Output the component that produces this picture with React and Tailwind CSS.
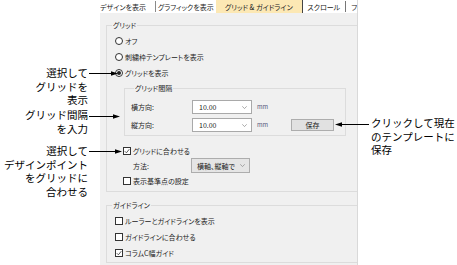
import React from "react";

const D = "text-[7px] leading-[8px] text-[#222] [font-feature-settings:'palt'] whitespace-nowrap";

function Radio({ checked, label }) {
  return (
    <div className="flex items-center h-[16px] pl-[8px] gap-[2px]">
      <span className="w-[8px] h-[8px] rounded-full border border-[#333] bg-white flex items-center justify-center">
        {checked && <span className="w-[4px] h-[4px] rounded-full bg-[#222]" />}
      </span>
      <span className={D}>{label}</span>
    </div>
  );
}

function Check({ checked, label, className = "" }) {
  return (
    <div className={"flex items-center gap-[2px] " + className}>
      <span className="w-[8px] h-[8px] border border-[#333] bg-white flex items-center justify-center">
        {checked && (
          <svg width="6" height="6" viewBox="0 0 6 6">
            <path d="M0.8 3.2 L2.4 4.8 L5.3 1.2" fill="none" stroke="#333" strokeWidth="0.8" />
          </svg>
        )}
      </span>
      <span className={D}>{label}</span>
    </div>
  );
}

function Chevron() {
  return (
    <svg width="5" height="3" viewBox="0 0 5 3">
      <path d="M0.3 0.3 L2.5 2.6 L4.7 0.3" fill="none" stroke="#888" strokeWidth="0.7" />
    </svg>
  );
}

function Input({ value }) {
  return (
    <div className="w-[60px] h-[14px] border border-[#a9a9a9] bg-white flex items-center justify-between pl-[6px] pr-[4px]">
      <span className={D}>{value}</span>
      <Chevron />
    </div>
  );
}

function Legend({ children }) {
  return <legend className={"ml-[5px] px-[1px] " + D}>{children}</legend>;
}

export default function App() {
  const note = "text-[10.5px] leading-[13.6px] text-black whitespace-nowrap";
  return (
    <div className="relative w-[457px] h-[265px] bg-white flex font-['Noto_Sans_CJK_JP',sans-serif] overflow-hidden">
      {/* left callouts column */}
      <div className="w-[100px] shrink-0 relative">
        <div className={"absolute right-[12px] top-[66px] text-right " + note}>
          <div>選択して</div>
          <div>グリッドを</div>
          <div>表示</div>
        </div>
        <div className={"absolute right-[12px] top-[108px] text-right " + note}>
          <div>グリッド間隔</div>
          <div>を入力</div>
        </div>
        <div className={"absolute right-[12px] top-[144px] text-right " + note}>
          <div>選択して</div>
          <div>デザインポイント</div>
          <div>をグリッドに</div>
          <div>合わせる</div>
        </div>
      </div>

      {/* dialog panel */}
      <div className="w-[258px] shrink-0 h-[265px] bg-[#f0f0f0] border-r border-[#d9d9d9] overflow-hidden flex flex-col">
        {/* tabs */}
        <div className={"h-[13px] bg-white flex items-stretch shrink-0 " + D}>
          <div className="w-[56px] border-r border-[#8a8a8a] flex items-center my-[1px]">デザインを表示</div>
          <div className="w-[61px] flex items-center justify-center">グラフィックを表示</div>
          <div className="w-[87px] bg-[#fce8b4] border-r border-[#444] flex items-center justify-center">グリッド &amp; ガイドライン</div>
          <div className="w-[44px] border-r border-[#777] flex items-center justify-center my-[1px]">スクロール</div>
          <div className="pl-[5px] flex items-center">フ</div>
        </div>

        {/* grid group */}
        <fieldset className="mt-[8px] ml-[6px] w-[262px] border border-[#dcdcdc] pt-[4px] pb-[3px] shrink-0">
          <Legend>グリッド</Legend>
          <Radio label="オフ" />
          <Radio label="刺繍枠テンプレートを表示" />
          <Radio checked label="グリッドを表示" />

          <fieldset className="mt-[3px] ml-[17px] w-[222px] border border-[#dcdcdc] pt-[8px] pb-[3px] pl-[6px]">
            <legend className={"ml-[3px] px-[1px] " + D}>グリッド間隔</legend>
            <div className="flex items-center h-[14px]">
              <span className={"w-[61px] " + D}>横方向:</span>
              <Input value="10.00" />
              <span className="ml-[5px] w-[14px] text-[6px] leading-[8px] text-[#55557a]">mm</span>
            </div>
            <div className="flex items-center h-[14px] mt-[4px]">
              <span className={"w-[61px] " + D}>縦方向:</span>
              <Input value="10.00" />
              <span className="ml-[5px] w-[14px] text-[6px] leading-[8px] text-[#55557a]">mm</span>
              <div className={"ml-[20px] w-[43px] h-[12px] -mt-[1px] bg-[#e1e1e1] border border-[#adadad] flex items-center justify-center " + D}>
                保存
              </div>
            </div>
          </fieldset>

          <Check checked label="グリッドに合わせる" className="h-[14px] mt-[8px] pl-[16px]" />
          <div className="flex items-center h-[15px] pl-[26px]">
            <span className={"w-[58px] " + D}>方法:</span>
            <div className="w-[59px] h-[15px] bg-[#e5e5e5] border border-[#adadad] flex items-center justify-between pl-[5px] pr-[4px]">
              <span className={D}>横軸、縦軸で</span>
              <Chevron />
            </div>
          </div>
          <Check label="表示基準点の設定" className="h-[14px] mt-[1px] pl-[16px]" />
        </fieldset>

        {/* guideline group */}
        <fieldset className="mt-[9px] ml-[6px] w-[262px] border border-[#dcdcdc] pt-[4px] pb-[1px] shrink-0">
          <Legend>ガイドライン</Legend>
          <Check label="ルーラーとガイドラインを表示" className="h-[16px] pl-[8px]" />
          <Check label="ガイドラインに合わせる" className="h-[16px] pl-[8px]" />
          <Check checked label="コラムC幅ガイド" className="h-[16px] pl-[8px]" />
        </fieldset>
      </div>

      {/* right callout column */}
      <div className="flex-1 relative">
        <div className={"absolute left-[13px] top-[116px] " + note}>
          <div>クリックして現在</div>
          <div>のテンプレートに</div>
          <div>保存</div>
        </div>
      </div>

      {/* arrows */}
      <svg className="absolute inset-0 pointer-events-none" width="457" height="265" viewBox="0 0 457 265">
        <g stroke="#000" strokeWidth="1">
          <line x1="89" y1="73.5" x2="113" y2="73.5" />
          <line x1="89" y1="116.5" x2="115" y2="116.5" />
          <line x1="89" y1="151.5" x2="117" y2="151.5" />
          <line x1="340" y1="124.5" x2="369" y2="124.5" />
        </g>
        <g fill="#000">
          <path d="M118 73.5 L111 71.3 L111 75.7 Z" />
          <path d="M120 116.5 L113 114.3 L113 118.7 Z" />
          <path d="M122 151.5 L115 149.3 L115 153.7 Z" />
          <path d="M335 124.5 L342 122.3 L342 126.7 Z" />
        </g>
      </svg>
    </div>
  );
}
